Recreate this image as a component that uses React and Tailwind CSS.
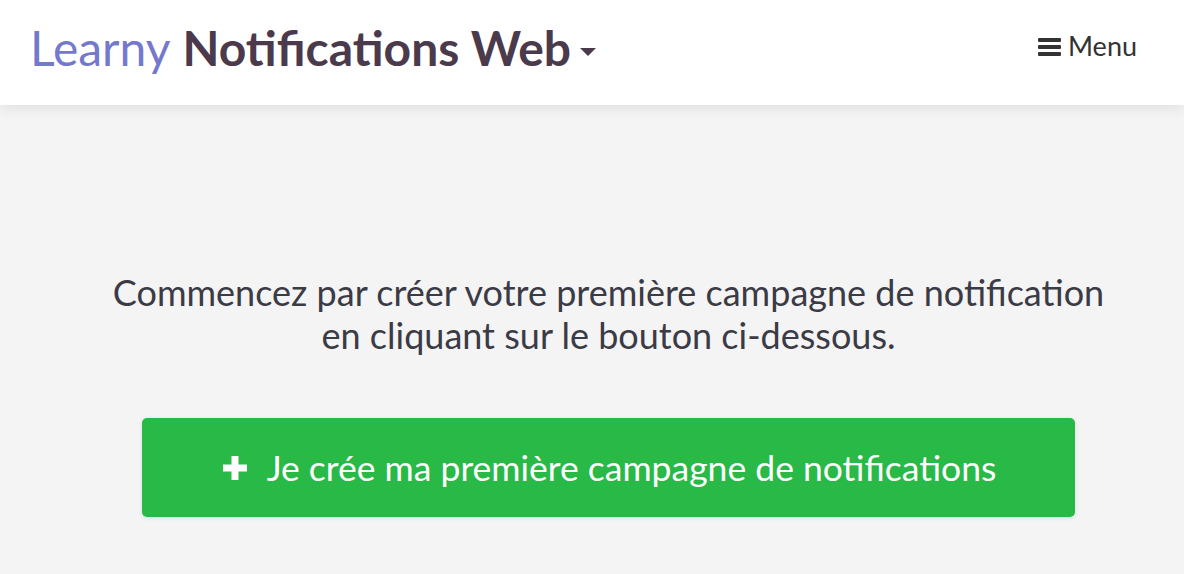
import React from 'react';

function App() {
  return (
    <div className="min-h-screen bg-[#f4f4f5] font-['Lato','Open_Sans',sans-serif] overflow-hidden">
      <header className="h-[105px] bg-white shadow-[0_4px_12px_rgba(0,0,0,0.08)] flex items-center justify-between pl-[30px] pr-[47px]">
        <div className="flex items-center text-[48px] leading-none pb-[10px]">
          <span className="text-[#7479cc]">Learny</span>
          <span className="ml-[12px] font-bold text-[#4b3a4b]">Notifications Web</span>
          <svg className="ml-[8px] mt-[8px]" width="18" height="10" viewBox="0 0 18 10">
            <path d="M1 1h16l-8 8z" fill="#4b3a4b" />
          </svg>
        </div>
        <button className="flex items-center text-[27px] text-[#333] pb-[12px]">
          <svg width="23" height="20" viewBox="0 0 23 20" className="mr-[7px]">
            <rect x="0" y="1" width="23" height="4" rx="1" fill="#333" />
            <rect x="0" y="8" width="23" height="4" rx="1" fill="#333" />
            <rect x="0" y="15" width="23" height="4" rx="1" fill="#333" />
          </svg>
          Menu
        </button>
      </header>
      <main className="w-[933px] ml-[142px] pt-[166px] text-center">
        <p className="text-[36px] leading-[43px] text-[#3b3b45] -mx-[60px]">
          Commencez par créer votre première campagne de notification
          <br />
          en cliquant sur le bouton ci-dessous.
        </p>
        <button className="mt-[61px] w-full h-[99px] rounded-[5px] bg-[#28b946] shadow-[0_1px_4px_rgba(0,0,0,0.1)] flex items-center justify-center text-white text-[35.5px]">
          <svg width="28" height="28" viewBox="0 0 28 28" className="mr-[18px]">
            <path d="M10.5 2h7v8.5H26v7h-8.5V26h-7v-8.5H2v-7h8.5z" fill="#fff" />
          </svg>
          Je crée ma première campagne de notifications
        </button>
      </main>
    </div>
  );
}

export default App;
